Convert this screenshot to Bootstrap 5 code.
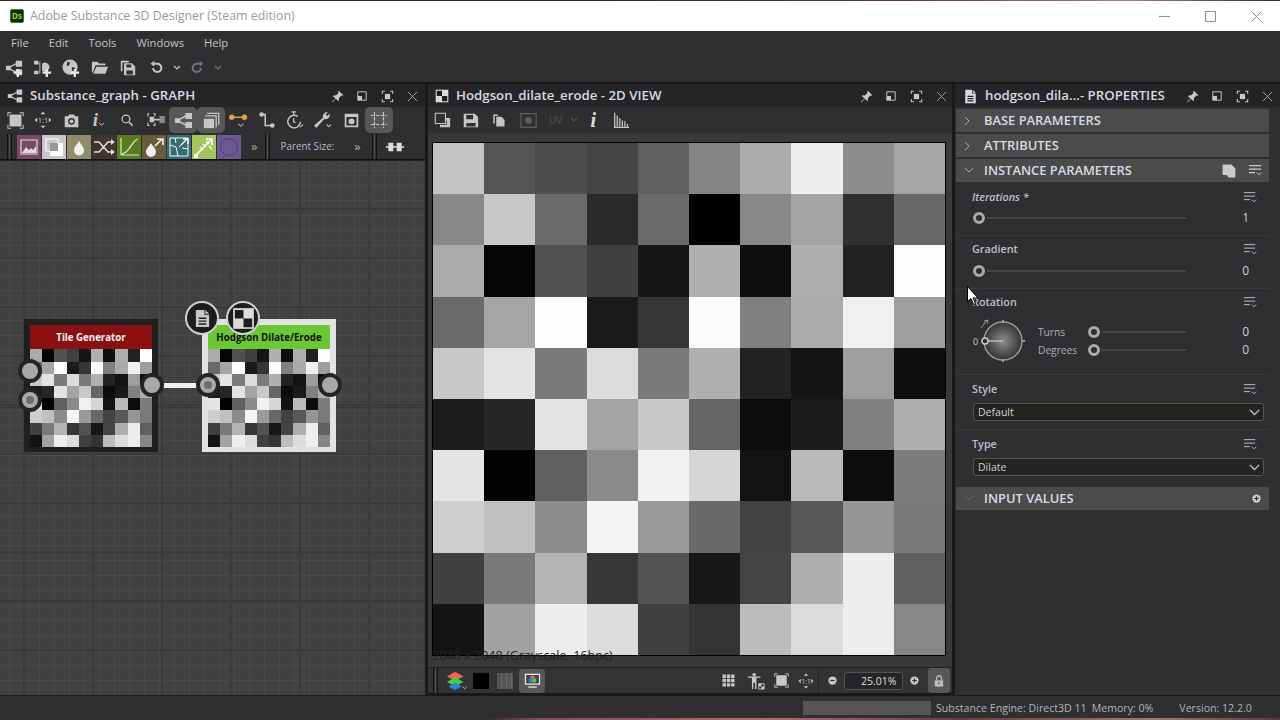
<!DOCTYPE html>
<html lang="en">
<head>
<meta charset="utf-8">
<title>Adobe Substance 3D Designer</title>
<link href="https://cdn.jsdelivr.net/npm/bootstrap@5.3.0/dist/css/bootstrap.min.css" rel="stylesheet">
<style>
html,body{height:100%}
body{width:1280px;height:720px;overflow:hidden;background:#2f2f31;color:#c9c9c9;font-family:"Open Sans","Liberation Sans",sans-serif;font-size:11px;line-height:1.2}
svg{display:block;flex:none}
.wall{height:1px;background:linear-gradient(90deg,#3a2a2a,#2a2226 40%,#5a3a38 70%,#a08070 88%,#3a2a2c)}
.wall-b{height:2px;background:linear-gradient(90deg,#2f2f31 38%,#8a4a58 42%,#b06a70 60%,#703a44 75%,#a07a6a 90%,#5a3a3a)}
.titlebar{height:30px;background:#fff;color:#9a9a9a;font-size:12.4px}
.ds-logo{width:14px;height:14px;margin:0 6px 0 10px;background:#0c2a10;border:1px solid #3d7a22;border-radius:2px;color:#7fe03a;font-size:8px;font-weight:700;line-height:12px;text-align:center}
.winbtn{width:46px;color:#8c8c8c}
.win-set{padding-right:1px}
.menubar{height:25px;padding:0 0 2px 11px;gap:20px;font-size:11.2px;color:#c4c4c4;background:#2f2f31}
.mainbar{height:26px;padding:0 0 3px 3px;gap:6.5px;color:#c6c6c6}
.icon22{width:22px}
.chev-slot{width:8px;margin:0 0 0 -1px}
.redo-slot{margin-left:-1px}
.workspace{height:613px;background:#19191a;padding-top:2px;gap:3px}
.pane-a{width:425px}.pane-b{width:524px}.pane-c{width:325px;margin-left:0}
.pane-head{height:23px;background:#252527;color:#d5dbe2;font-size:13.25px;font-weight:600;flex:none;padding-top:1px}
.head-ico{width:30px;color:#c8c8c8}
.head-acts{gap:5px;padding-right:3px;color:#c8c8c8}
.head-acts-b{padding-right:1px}
.head-act{width:20px}
.tools{height:26px;background:#2f2f31;color:#c6c6c6;flex:none}
.tbtn{width:28px;height:26px;border-radius:5px}
.tbtn.on{background:#585858}
.tbtn-dis{margin-left:2px}
.rowa{padding-left:1px}
.rowb{height:27px;border-bottom:1px solid #111;padding-top:1px;align-items:center}
.grip{width:5px;height:25px;margin-left:7px;border-left:1px solid #111;border-right:1px solid #111;background:#4a4a4a;background-clip:content-box;padding:0 1px}
.grip-d{margin-left:11px}
.pal{width:24px;height:24px;margin-left:1px}
.pal-first{margin-left:5px}
.more{color:#a8a8a8;font-size:13px}
.more-a{margin-left:10px}
.parent-lab{color:#aeb8c4;font-size:9.9px;margin-left:10px}
.more-b{margin-left:20px}
.graph-wrap{flex:1 1 auto;background-color:#414143;background-image:linear-gradient(#38383a,#38383a),linear-gradient(90deg,#3a3a3c 2px,transparent 2px),linear-gradient(0deg,#3a3a3c 2px,transparent 2px),linear-gradient(90deg,#4a4a44 1px,transparent 1px),linear-gradient(0deg,#4a4a44 1px,transparent 1px);background-size:100% 1px,69px 69px,69px 49px,15px 15px,15px 15px;background-position:0 246px,23px 0,0 0,9px 0,0 10px;background-repeat:no-repeat,repeat,repeat,repeat,repeat;overflow:hidden;border-top:1px solid #222}
.nodebox{position:absolute;top:158px;width:134px;height:133px;padding:6px 6px 5px}
.node-dark{left:24px;background:#1f1f20}
.node-sel{left:202px;background:#e2e2e2}
.node-in{position:relative;width:122px;height:122px}
.node-title{position:absolute;left:0;top:0;right:0;height:24px;padding-top:2px;font-size:9.7px;font-weight:700;display:flex;align-items:center;justify-content:center}
.title-red{background:#8a1011;color:#f2f2f2}
.title-green{background:#6cc735;color:#111}
.tile-grid{display:grid;grid-template-columns:repeat(10,1fr);grid-template-rows:repeat(10,1fr);width:100%;height:100%}
.port{position:absolute;width:24px;height:24px;margin:-12px 0 0 -12px;border-radius:50%;background:#a8a8a8;border:4px solid #242425}
.port-dot::after{content:"";position:absolute;left:4px;top:4px;width:8px;height:8px;border-radius:50%;background:#6e6e6e}
.wire{position:absolute;left:163px;top:222px;width:34px;height:5px;background:#f0f0f0}
.badge-ico{position:absolute;width:34px;height:34px;margin:-17px 0 0 -17px;border-radius:50%;background:#1d1d1e;border:2px solid #d0d0d0;display:flex;align-items:center;justify-content:center;color:#c8c8c8}
.view-wrap{flex:1 1 auto;background:#39393b;padding:9px 0 0 4px;position:relative;overflow:hidden}
.view-img{width:514px;height:514px;border:1px solid #000}
.view-note{position:absolute;left:4px;top:514px;color:#222;font-size:12.6px;line-height:18px}
.botbar{height:26px;background:#333335;color:#c8c8c8;flex:none;border-top:1px solid #222;margin-bottom:2px}
.grip-c{margin-left:5px}
.lay-ico{margin-left:8px}
.mini-black{width:16px;height:16px;background:#000;margin-left:5px}
.mini-str{width:16px;height:16px;margin-left:8px;background:repeating-linear-gradient(90deg,#555 0 4px,#666 4px 5px)}
.mon-btn{width:26px;height:24px;margin-left:6px;background:#585858;border-radius:4px}
.zoombox{width:59px;height:18px;border:1px solid #555;border-radius:3px;background:#252527;font-size:10.5px;text-align:right;padding:2px 5px 0 0;color:#ddd;margin:0 6px}
.lockbtn{width:22px;height:25px;background:#585858;border-radius:4px;margin-left:8.5px;color:#bbb}
.vsep{width:1px;height:24px;background:#222;margin:0 8px 0 3px}
.gap-p{margin-left:10.5px}.gap-f{margin-left:9.5px}.gap-o{margin-left:7.5px}
.end-sp{width:2px}
.props{flex:1 1 auto;padding:0 11px 0 1px;background:#2f2f31}
.sect{height:23px;margin-top:2px;background:#4b4b4b;color:#d5dce4;font-size:12.9px;font-weight:600;padding-left:8px;flex:none}
.sect-ico{width:20px;margin-right:0;color:#aaa}
.sect-ico-dim{color:#666}
.sect-acts{gap:11px;padding-right:7px;color:#ccc}
.prm{border-bottom:1px solid #3a3a3c;padding:5px 20px 0 17px;flex:none}
.prm-a{height:54px;padding-top:7px}.prm-b{height:53px}.prm-c{height:86px}.prm-d{height:55px;padding-top:6px}
.prm-d.nobr{border:0}
.prm-lab{height:16px;color:#b9c0c8;font-size:10.8px;font-weight:600;margin-left:-1px}
.lab-it{font-style:italic}
.prm-menu{margin-right:-8px}
.sld{height:16px;margin-top:5px}
.prm-b .sld{margin-top:6px}
.knob-hd{width:12px;height:12px;border-radius:50%;border:3px solid #aaa;flex:none}
.trk{height:2px;background:#47474a;margin-left:2px}
.trk-w{width:199px}.trk-s{width:84px}
.val{margin-left:auto;color:#d0d0d0;font-size:12px}
.rot-row{margin-top:6px;height:50px}
.rot-labs{margin-left:5px;width:100%}
.rot-line{height:18px;color:#aab2ba;font-size:10.2px}
.rot-name{width:50px}
.selbox.form-select{width:291px;margin:6px 0 0 0;height:18px;padding:0 0 0 4px;font-size:10.5px;line-height:16px;background-color:#252320;color:#d0d0d0;border:1px solid #555;border-radius:3px;font-family:inherit;background-size:11px 7px;background-position:right 3px center;background-image:url("data:image/svg+xml,%3Csvg xmlns='http://www.w3.org/2000/svg' viewBox='0 0 11 7'%3E%3Cpath d='M1 1l4.500 4.500L10 1' fill='none' stroke='%23bbb' stroke-width='1.400'/%3E%3C/svg%3E")}
.cursor{position:absolute;left:967px;top:286px}
.statusbar{height:23px;background:#2f2f31;border-top:1px solid #19191a;font-size:10.6px;color:#b4b4b4;padding-top:2px}
.progress-slot{width:128px;height:14px;background:#555;margin:0 5px 0 803px}
.st-mem{margin-left:5px}.st-ver{margin-left:26px}
.ital-i{font:italic 700 19px "Liberation Serif",serif}
.ital-v{font:italic 700 20px "Liberation Serif",serif;color:#ddd}
.uv-lab{color:#555;font-size:10px;margin-left:7px}
.uv-chev{color:#555;margin-left:8px}
.i-slot{margin-left:1px}
</style>
</head>
<body class="d-flex flex-column">
<svg width="0" height="0" class="position-absolute">
<defs>
<symbol id="i-graph" viewBox="0 0 20 20"><path fill="currentColor" d="M1 7.500h5.500v5H1zM12 2h7v6.500h-7zM12 11.500h7V18h-7z"/><path d="M5 9l8-4M5 11l8 4" stroke="currentColor" stroke-width="1.500" fill="none"/></symbol>
<symbol id="i-plus" viewBox="0 0 20 20"><path fill="#e8e8e8" d="M13 11h2.500v3H19v2.500h-3.500V20H13v-3.500H9.500V14H13z"/></symbol>
<symbol id="i-fn" viewBox="0 0 20 20"><path fill="currentColor" d="M0 2h5v4H0zM0 13h5v4H0zM6 3h1v13H6zM9 5a5 5 0 1 1 0 8z"/></symbol>
<symbol id="i-globe" viewBox="0 0 20 20"><circle cx="9" cy="9" r="8.500" fill="currentColor"/><path fill="#2f2f31" d="M6 3l3 1-1 3-3 1zM11 9l4 1-2 4-2-1z"/></symbol>
<symbol id="i-folder" viewBox="0 0 20 20"><path fill="currentColor" d="M1 3h6l2 2h7v2H5L2 15H1zM6 8.500h13l-3 8H2.500z"/></symbol>
<symbol id="i-stack" viewBox="0 0 20 20"><path fill="currentColor" fill-rule="evenodd" d="M1 1h10v2H3v11H1zM5 4h10l4 4v11H5zM8 5.500v4h6v-4zM8 13v5h8v-5z"/></symbol>
<symbol id="i-floppy" viewBox="0 0 20 20"><path fill="currentColor" fill-rule="evenodd" d="M2 2h13l4 4v12H2zM5 3.500v5h8v-5zM5 13v4h11v-4z"/></symbol>
<symbol id="i-undo" viewBox="0 0 20 20"><path d="M5 5h6a5.500 5.500 0 1 1-5.500 5.500" fill="none" stroke="currentColor" stroke-width="2.600"/><path fill="currentColor" d="M7 1v8L2 5z"/></symbol>
<symbol id="i-redo" viewBox="0 0 20 20"><path d="M15 5H9a5.500 5.500 0 1 0 5.500 5.500" fill="none" stroke="currentColor" stroke-width="2.600"/><path fill="currentColor" d="M13 1v8l5-4z"/></symbol>
<symbol id="i-chev" viewBox="0 0 8 6"><path d="M1 1l3 3 3-3" fill="none" stroke="currentColor" stroke-width="1.200"/></symbol>
<symbol id="i-pin" viewBox="0 0 20 20"><path fill="currentColor" d="M12 1l7 7-2 1-1-.500-4 4 .500 3-1.500 1.500-3.500-3.500-5 5.500-1-1 5.500-5L3 9.500 4.500 8l3 .500 4-4L11 3z"/></symbol>
<symbol id="i-restore" viewBox="0 0 20 20"><path d="M3 3h14v14H3z" fill="none" stroke="currentColor" stroke-width="1.600"/><path fill="currentColor" d="M3 10h7V3H3z" transform="translate(0 7)"/></symbol>
<symbol id="i-max" viewBox="0 0 20 20"><path d="M2 6V2h4M14 2h4v4M18 14v4h-4M6 18H2v-4" fill="none" stroke="currentColor" stroke-width="1.600"/><path fill="currentColor" d="M6 6h8v8H6z"/></symbol>
<symbol id="i-x" viewBox="0 0 20 20"><path d="M3 3l14 14M17 3L3 17" stroke="currentColor" stroke-width="1.100" fill="none"/></symbol>
<symbol id="i-doc" viewBox="0 0 20 20"><path fill="currentColor" fill-rule="evenodd" d="M3 1h9v5h5v13H3zM13 1l4 4h-4zM6 9v1.500h8V9zM6 12v1.500h8V12zM6 15v1.500h8V15z"/></symbol>
<symbol id="i-check" viewBox="0 0 20 20"><path fill="#dcdcdc" d="M1 1h18v18H1z"/><path fill="#1d1d1e" d="M2.500 2.500H10V10H2.500zM10 10h7.500v7.500H10z"/></symbol>
<symbol id="i-fit" viewBox="0 0 20 20"><path d="M1 5V1h4M15 1h4v4M19 15v4h-4M5 19H1v-4" fill="none" stroke="currentColor" stroke-width="1.200"/><path fill="currentColor" d="M3 3h14v14H3z"/></symbol>
<symbol id="i-one" viewBox="0 0 24 24"><path fill="currentColor" d="M12 2l3 3H9zM12 22l-3-3h6zM2 12l3-3v6zM22 12l-3 3V9z"/><text x="12" y="15.500" font-size="9" text-anchor="middle" fill="currentColor" font-family="Open Sans">1:1</text></symbol>
<symbol id="i-cam" viewBox="0 0 20 20"><path fill="currentColor" fill-rule="evenodd" d="M2 5h4l1-2h6l1 2h4v13H2zM10 7a4 4 0 1 0 0 8 4 4 0 0 0 0-8z"/><circle cx="10" cy="11" r="2.300" fill="currentColor"/></symbol>
<symbol id="i-search" viewBox="0 0 20 20"><circle cx="8.500" cy="8.500" r="5.500" fill="none" stroke="currentColor" stroke-width="1.800"/><path d="M13 13l5 5" stroke="currentColor" stroke-width="2.200"/></symbol>
<symbol id="i-snap" viewBox="0 0 24 20"><path d="M4 6V3h2M10 3h2v3M12 13v3h-2M6 16H4v-3" stroke="currentColor" stroke-width="1.200" fill="none"/><path fill="currentColor" d="M6 6.500h5v6H6zM11 8.500h8v2h-8z"/><path fill="#8a8a8a" d="M17 5.500h6v8h-6z"/></symbol>
<symbol id="i-layers2" viewBox="0 0 20 20"><path d="M5 1.500h13.500V15M2.500 4.500h13V18" fill="none" stroke="currentColor" stroke-width="1.500"/><path fill="currentColor" d="M1 8h12v11H1z"/></symbol>
<symbol id="i-link" viewBox="0 0 24 20"><path d="M4 7h14" stroke="#e0a24a" stroke-width="1.600"/><circle cx="4" cy="7" r="3" fill="#e0a24a"/><circle cx="18" cy="7" r="3" fill="#e0a24a"/><path d="M11 14l3 3 3-3" fill="none" stroke="#aaa" stroke-width="1.200"/></symbol>
<symbol id="i-route" viewBox="0 0 20 20"><circle cx="4" cy="4" r="2.500" fill="currentColor"/><circle cx="16" cy="16" r="2.500" fill="currentColor"/><path d="M4 4h4v12h8" fill="none" stroke="currentColor" stroke-width="1.700"/></symbol>
<symbol id="i-timer" viewBox="0 0 22 20"><path d="M14 6a7 7 0 1 0 3 6" fill="none" stroke="currentColor" stroke-width="1.600"/><path d="M7 1h5M9.500 1v3M9.500 8v4l2 1" stroke="currentColor" stroke-width="1.400" fill="none"/><path d="M15 15l2.500 2.500L20 15" fill="none" stroke="#aaa" stroke-width="1.200"/></symbol>
<symbol id="i-wrench" viewBox="0 0 22 20"><path fill="currentColor" d="M16 1a5 5 0 0 0-5 6.500L1 16l2.500 3 9-10A5 5 0 0 0 18.500 3l-3 2.500L14 4l2.500-3z"/><path d="M15 15l2.500 2.500L20 15" fill="none" stroke="#aaa" stroke-width="1.200"/></symbol>
<symbol id="i-view" viewBox="0 0 20 20"><path fill="currentColor" fill-rule="evenodd" d="M2 2h16v16H2zM4 6v10h12V6z"/><circle cx="10" cy="11" r="3.500" fill="currentColor"/></symbol>
<symbol id="i-frame" viewBox="0 0 20 20"><path d="M5 1v18M15 1v18M1 5h18M1 15h18" stroke="currentColor" stroke-width="1.300" stroke-dasharray="4 1.500" fill="none"/></symbol>
<symbol id="i-pic" viewBox="0 0 24 24"><path d="M4 5h16v14H4z" fill="none" stroke="#e4d8de" stroke-width="1.200"/><path fill="#e4d8de" d="M5 18l4-6 3 3 2-2 2 2 3-4v7z"/></symbol>
<symbol id="i-blend" viewBox="0 0 24 24"><path d="M4 4h12v12H4z" fill="none" stroke="#fff" stroke-width="1.200"/><path fill="#fff" d="M8 8h13v13H8z"/><path fill="#999" d="M8 8h8v8H8z"/></symbol>
<symbol id="i-drop" viewBox="0 0 24 24"><path fill="#f0f0f0" d="M12 6c2.500 4 5 6 5 9.500a5 5 0 0 1-10 0c0-3.500 2.500-5.500 5-9.500z"/></symbol>
<symbol id="i-shuf" viewBox="0 0 24 24"><path d="M2 7h5l9 10h4M2 17h5l9-10h4" stroke="#ddd" stroke-width="1.500" fill="none"/><path fill="#ddd" d="M19 4l4 3-4 3zM19 14l4 3-4 3z"/></symbol>
<symbol id="i-curve" viewBox="0 0 24 24"><path d="M4 3v17h18" stroke="#d8e8c0" stroke-width="1.200" fill="none"/><path d="M5 19c5-1 6-4 9-8s4-6 7-7" stroke="#d8e8c0" stroke-width="1.300" fill="none"/></symbol>
<symbol id="i-droparrow" viewBox="0 0 24 24"><path fill="#eee" d="M9 8c2 4 5 5 5 9a5 5 0 0 1-10 0c0-4 3-5 5-9z"/><path d="M13 11l7-7M15 4h6v6" stroke="#eee" stroke-width="1.700" fill="none"/></symbol>
<symbol id="i-warp" viewBox="0 0 24 24"><path d="M3 3h18v18H3zM3 10l6 2 2 9M12 12l3-3M8 3l1 5M21 14l-6-1" fill="none" stroke="#dff" stroke-width="1"/><path d="M14 10l6-6M16 4h5v5" stroke="#fff" stroke-width="1.300" fill="none"/></symbol>
<symbol id="i-grad" viewBox="0 0 24 24"><path d="M3 21L20 4M14 4h6v6" stroke="#fff" stroke-width="1.600" fill="none"/><path d="M8 12l3 3M11 9l3 3M14 6l3 3M17 11l3 3" stroke="#fff" stroke-width="1.100"/><path fill="#fff" d="M2 19h4v4H2z"/></symbol>
<symbol id="i-ring" viewBox="0 0 24 24"><circle cx="12" cy="12" r="8.500" fill="none" stroke="#46407a" stroke-width="1"/></symbol>
<symbol id="i-nodes" viewBox="0 0 24 14"><path fill="#ddd" d="M1 6h22v2H1zM4 2h6v10H4zM14 2h6v10h-6z"/></symbol>
<symbol id="i-card" viewBox="0 0 20 20"><path fill="currentColor" d="M2 2h11l5 5v11h-9l-1-2-1-1H2z" /></symbol>
<symbol id="i-menu" viewBox="0 0 16 16"><path d="M1 3h13M1 7h13M1 11h7" stroke="currentColor" stroke-width="1.100" fill="none"/><path d="M10 11l2.500 2.500L15 11" stroke="currentColor" stroke-width="1.100" fill="none"/></symbol>
<symbol id="i-menub" viewBox="0 0 16 16"><path d="M1 3h14M1 7h14M1 11h7" stroke="currentColor" stroke-width="1.700" fill="none"/><path d="M10 11l2.500 2.500L15 11" stroke="currentColor" stroke-width="1.100" fill="none"/></symbol>
<symbol id="i-copy" viewBox="0 0 20 20"><path d="M1.500 1.500h12v12h-12z" fill="none" stroke="currentColor" stroke-width="1.300"/><path fill="currentColor" d="M7 15h8v-5h-1V7h5v11H7z"/></symbol>
<symbol id="i-paste" viewBox="0 0 20 20"><path fill="currentColor" d="M3 2h6v2H5v10H3zM7 5h7l4 4v9H7z"/></symbol>
<symbol id="i-disabled" viewBox="0 0 20 20"><path d="M1 2h18v16H1z" fill="none" stroke="#5c5c5c" stroke-width="1.500"/><circle cx="10" cy="10" r="4" fill="#5c5c5c"/></symbol>
<symbol id="i-bars" viewBox="0 0 20 20"><path d="M2 1v17h17M5 4v13M8 7v10M11 10v7M14 11v6M17 14v3" stroke="currentColor" stroke-width="1.500" fill="none"/></symbol>
<symbol id="i-stackc" viewBox="0 0 24 24"><path fill="#ef6a4a" d="M10 2l9 5-9 5-9-5z"/><path fill="#3fce4a" d="M10 8l9 5-9 5-9-5z"/><path fill="#2f80d8" d="M10 14l7 4-7 4-7-4z"/><path d="M18 18l2.500 2.500L23 18" stroke="#aaa" fill="none"/></symbol>
<symbol id="i-mon" viewBox="0 0 20 20"><path d="M1 2h18v13H1z" fill="#e8e8e8"/><path d="M2.500 3.500h15v10h-15z" fill="#444"/><circle cx="10" cy="6.500" r="2.600" fill="#ef5a4a"/><circle cx="8" cy="10" r="2.600" fill="#2f80d8"/><circle cx="12" cy="10" r="2.600" fill="#3fce4a"/><path d="M5 17h10v1.500H5z" fill="#e8e8e8"/></symbol>
<symbol id="i-grid" viewBox="0 0 20 20"><path fill="currentColor" d="M2 2h4.500v4.500H2zM7.800 2h4.500v4.500H7.800zM13.500 2H18v4.500h-4.500zM2 7.800h4.500v4.500H2zM7.800 7.800h4.500v4.500H7.800zM13.500 7.800H18v4.500h-4.500zM2 13.500h4.500V18H2zM7.800 13.500h4.500V18H7.800zM13.500 13.500H18V18h-4.500z"/></symbol>
<symbol id="i-person" viewBox="0 0 20 20"><circle cx="8" cy="3" r="2" fill="currentColor"/><path fill="currentColor" d="M1 5h14v1.500h-4.500V19H9v-7H7v7H5.500V6.500H1z"/><path d="M13 13h6v6h-6z" fill="none" stroke="currentColor"/><path fill="currentColor" d="M13 13h3v3h-3zM16 16h3v3h-3z"/></symbol>
<symbol id="i-minus" viewBox="0 0 12 12"><circle cx="6" cy="6" r="4.500" fill="currentColor"/><path d="M3.500 6h5" stroke="#333" stroke-width="1.300"/></symbol>
<symbol id="i-pluss" viewBox="0 0 12 12"><circle cx="6" cy="6" r="4.500" fill="currentColor"/><path d="M3.500 6h5M6 3.500v5" stroke="#333" stroke-width="1.300"/></symbol>
<symbol id="i-lock" viewBox="0 0 20 20"><path d="M6.500 9V6a3.500 3.500 0 0 1 7 0v3" fill="none" stroke="currentColor" stroke-width="1.800"/><path fill="currentColor" d="M4 9h12v9H4z"/><circle cx="10" cy="13" r="1.300" fill="#585858"/></symbol>
</defs>
</svg>

<div class="wall"></div>
<div class="titlebar d-flex align-items-center">
  <div class="ds-logo">Ds</div>
  <span>Adobe Substance 3D Designer (Steam edition)</span>
  <div class="win-set ms-auto d-flex">
    <div class="winbtn d-flex justify-content-center"><svg width="11" height="11" viewBox="0 0 11 11"><path d="M0 5.500h11" stroke="currentColor"/></svg></div>
    <div class="winbtn d-flex justify-content-center"><svg width="11" height="11" viewBox="0 0 11 11"><path d="M.5.500h10v10H.5z" fill="none" stroke="currentColor"/></svg></div>
    <div class="winbtn d-flex justify-content-center"><svg width="11" height="11" viewBox="0 0 11 11"><path d="M.5.500l10 10M10.500.500l-10 10" stroke="currentColor"/></svg></div>
  </div>
</div>
<div class="menubar d-flex align-items-center"><span>File</span><span>Edit</span><span>Tools</span><span>Windows</span><span>Help</span></div>
<div class="mainbar d-flex align-items-center">
  <div class="icon22 position-relative"><svg width="18" height="18" class="mx-auto"><use href="#i-graph"/><use href="#i-plus"/></svg></div>
  <div class="icon22"><svg width="18" height="18" class="mx-auto"><use href="#i-fn"/><use href="#i-plus"/></svg></div>
  <div class="icon22"><svg width="18" height="18" class="mx-auto"><use href="#i-globe"/><use href="#i-plus"/></svg></div>
  <div class="icon22"><svg width="18" height="18" class="mx-auto"><use href="#i-folder"/></svg></div>
  <div class="icon22"><svg width="16" height="16" class="mx-auto"><use href="#i-stack"/></svg></div>
  <div class="icon22"><svg width="15" height="15" class="mx-auto"><use href="#i-undo"/></svg></div>
  <div class="chev-slot"><svg width="8" height="6"><use href="#i-chev"/></svg></div>
  <div class="icon22 redo-slot text-secondary"><svg width="15" height="15" class="mx-auto"><use href="#i-redo"/></svg></div>
  <div class="chev-slot text-secondary"><svg width="8" height="6"><use href="#i-chev"/></svg></div>
</div>

<div class="workspace d-flex">
  <!-- GRAPH -->
  <section class="pane-a d-flex flex-column">
    <div class="pane-head d-flex align-items-center">
      <div class="head-ico d-flex justify-content-center"><svg width="16" height="16"><use href="#i-graph"/></svg></div>
      <span>Substance_graph - GRAPH</span>
      <div class="head-acts ms-auto d-flex">
        <div class="head-act"><svg width="13" height="13" class="mx-auto"><use href="#i-pin"/></svg></div>
        <div class="head-act"><svg width="12" height="12" class="mx-auto"><use href="#i-restore"/></svg></div>
        <div class="head-act"><svg width="13" height="13" class="mx-auto"><use href="#i-max"/></svg></div>
        <div class="head-act"><svg width="13" height="13" class="mx-auto"><use href="#i-x"/></svg></div>
      </div>
    </div>
    <div class="tools rowa d-flex align-items-center">
      <div class="tbtn d-flex align-items-center justify-content-center"><svg width="17" height="17"><use href="#i-fit"/></svg></div>
      <div class="tbtn d-flex align-items-center justify-content-center"><svg width="20" height="20"><use href="#i-one"/></svg></div>
      <div class="tbtn d-flex align-items-center justify-content-center"><svg width="17" height="17"><use href="#i-cam"/></svg></div>
      <div class="tbtn d-flex align-items-center justify-content-center"><span class="ital-i">i</span><svg width="7" height="5" class="mt-2"><use href="#i-chev"/></svg></div>
      <div class="tbtn d-flex align-items-center justify-content-center"><svg width="14" height="14"><use href="#i-search"/></svg></div>
      <div class="tbtn d-flex align-items-center justify-content-center"><svg width="22" height="18"><use href="#i-snap"/></svg></div>
      <div class="tbtn on d-flex align-items-center justify-content-center"><svg width="19" height="19"><use href="#i-graph"/></svg></div>
      <div class="tbtn on d-flex align-items-center justify-content-center"><svg width="17" height="17"><use href="#i-layers2"/></svg></div>
      <div class="tbtn d-flex align-items-center justify-content-center"><svg width="22" height="18"><use href="#i-link"/></svg></div>
      <div class="tbtn d-flex align-items-center justify-content-center"><svg width="18" height="18"><use href="#i-route"/></svg></div>
      <div class="tbtn d-flex align-items-center justify-content-center"><svg width="20" height="18"><use href="#i-timer"/></svg></div>
      <div class="tbtn d-flex align-items-center justify-content-center"><svg width="20" height="18"><use href="#i-wrench"/></svg></div>
      <div class="tbtn d-flex align-items-center justify-content-center"><svg width="17" height="17"><use href="#i-view"/></svg></div>
      <div class="tbtn on d-flex align-items-center justify-content-center"><svg width="18" height="18"><use href="#i-frame"/></svg></div>
    </div>
    <div class="tools rowb d-flex">
      <div class="grip"></div>
      <div class="pal pal-first d-flex align-items-center" style="background:#7a4a60"><svg width="24" height="24"><use href="#i-pic"/></svg></div>
      <div class="pal" style="background:#c8c8c8"><svg width="24" height="24"><use href="#i-blend"/></svg></div>
      <div class="pal" style="background:#8f8c6c"><svg width="24" height="24"><use href="#i-drop"/></svg></div>
      <div class="pal" style="background:#40342c"><svg width="24" height="24"><use href="#i-shuf"/></svg></div>
      <div class="pal" style="background:#5a7a20"><svg width="24" height="24"><use href="#i-curve"/></svg></div>
      <div class="pal" style="background:#6a5c3a"><svg width="24" height="24"><use href="#i-droparrow"/></svg></div>
      <div class="pal" style="background:#3a6a72"><svg width="24" height="24"><use href="#i-warp"/></svg></div>
      <div class="pal" style="background:#a4c460"><svg width="24" height="24"><use href="#i-grad"/></svg></div>
      <div class="pal" style="background:#6a5a90"><svg width="24" height="24"><use href="#i-ring"/></svg></div>
      <span class="more more-a">»</span>
      <div class="grip ms-2"></div>
      <span class="parent-lab text-nowrap">Parent Size:</span>
      <span class="more more-b">»</span>
      <div class="grip grip-d"></div>
      <svg class="ms-2" width="20" height="12"><use href="#i-nodes"/></svg>
    </div>
    <div class="graph-wrap position-relative">
      <div class="nodebox node-dark"><div class="node-in"><div class="tile-grid" data-tiles></div><div class="node-title title-red">Tile Generator</div></div></div>
      <div class="nodebox node-sel"><div class="node-in"><div class="tile-grid" data-tiles></div><div class="node-title title-green">Hodgson Dilate/Erode</div></div></div>
      <div class="wire"></div>
      <div class="port" style="left:30px;top:210px"></div>
      <div class="port port-dot" style="left:30px;top:239px"></div>
      <div class="port" style="left:152px;top:224px"></div>
      <div class="port port-dot" style="left:208px;top:224px"></div>
      <div class="port" style="left:330px;top:224px"></div>
      <div class="badge-ico" style="left:202px;top:157px"><svg width="19" height="19"><use href="#i-doc"/></svg></div>
      <div class="badge-ico" style="left:243px;top:157px"><svg width="23" height="23"><use href="#i-check"/></svg></div>
    </div>
  </section>

  <!-- 2D VIEW -->
  <section class="pane-b d-flex flex-column">
    <div class="pane-head d-flex align-items-center">
      <div class="d-flex justify-content-center" style="width:28px"><svg width="14" height="14"><use href="#i-check"/></svg></div>
      <span>Hodgson_dilate_erode - 2D VIEW</span>
      <div class="head-acts head-acts-b ms-auto d-flex">
        <div class="head-act"><svg width="13" height="13" class="mx-auto"><use href="#i-pin"/></svg></div>
        <div class="head-act"><svg width="12" height="12" class="mx-auto"><use href="#i-restore"/></svg></div>
        <div class="head-act"><svg width="13" height="13" class="mx-auto"><use href="#i-max"/></svg></div>
        <div class="head-act"><svg width="13" height="13" class="mx-auto"><use href="#i-x"/></svg></div>
      </div>
    </div>
    <div class="tools d-flex align-items-center">
      <div class="tbtn d-flex align-items-center justify-content-center"><svg width="17" height="17"><use href="#i-copy"/></svg></div>
      <div class="tbtn d-flex align-items-center justify-content-center"><svg width="17" height="17"><use href="#i-floppy"/></svg></div>
      <div class="tbtn d-flex align-items-center justify-content-center"><svg width="15" height="15"><use href="#i-paste"/></svg></div>
      <div class="tbtn tbtn-dis d-flex align-items-center justify-content-center"><svg width="17" height="17"><use href="#i-disabled"/></svg></div>
      <span class="uv-lab">UV</span>
      <svg width="8" height="6" class="uv-chev"><use href="#i-chev"/></svg>
      <div class="tbtn i-slot d-flex align-items-center justify-content-center"><span class="ital-v">i</span></div>
      <div class="tbtn d-flex align-items-center justify-content-center"><svg width="17" height="17"><use href="#i-bars"/></svg></div>
    </div>
    <div class="view-wrap">
      <div class="view-img"><div class="tile-grid" data-tiles></div></div>
      <div class="view-note">2048 x 2048 (Grayscale, 16bpc)</div>
    </div>
    <div class="botbar d-flex align-items-center">
      <div class="grip grip-c"></div>
      <svg width="22" height="22" class="lay-ico"><use href="#i-stackc"/></svg>
      <div class="mini-black"></div>
      <div class="mini-str"></div>
      <div class="mon-btn d-flex align-items-center justify-content-center"><svg width="17" height="17"><use href="#i-mon"/></svg></div>
      <div class="ms-auto d-flex align-items-center">
        <svg width="15" height="15"><use href="#i-grid"/></svg>
        <svg width="18" height="18" class="gap-p"><use href="#i-person"/></svg>
        <svg width="15" height="15" class="gap-f"><use href="#i-fit"/></svg>
        <svg width="18" height="18" class="gap-o"><use href="#i-one"/></svg>
        <div class="vsep"></div>
        <svg width="11" height="11"><use href="#i-minus"/></svg>
        <div class="zoombox">25.01%</div>
        <svg width="11" height="11"><use href="#i-pluss"/></svg>
        <div class="lockbtn d-flex align-items-center justify-content-center"><svg width="14" height="14"><use href="#i-lock"/></svg></div>
        <span class="end-sp"></span>
      </div>
    </div>
  </section>

  <!-- PROPERTIES -->
  <section class="pane-c d-flex flex-column">
    <div class="pane-head d-flex align-items-center">
      <div class="d-flex justify-content-center" style="width:30px"><svg width="15" height="15"><use href="#i-doc"/></svg></div>
      <span>hodgson_dila...- PROPERTIES</span>
      <div class="head-acts ms-auto d-flex">
        <div class="head-act"><svg width="13" height="13" class="mx-auto"><use href="#i-pin"/></svg></div>
        <div class="head-act"><svg width="12" height="12" class="mx-auto"><use href="#i-restore"/></svg></div>
        <div class="head-act"><svg width="13" height="13" class="mx-auto"><use href="#i-max"/></svg></div>
        <div class="head-act"><svg width="13" height="13" class="mx-auto"><use href="#i-x"/></svg></div>
      </div>
    </div>
    <div class="props d-flex flex-column">
      <div class="sect d-flex align-items-center"><div class="sect-ico"><svg width="7" height="10" viewBox="0 0 7 10"><path d="M1 1l4 4-4 4" fill="none" stroke="currentColor"/></svg></div>BASE PARAMETERS</div>
      <div class="sect d-flex align-items-center"><div class="sect-ico"><svg width="7" height="10" viewBox="0 0 7 10"><path d="M1 1l4 4-4 4" fill="none" stroke="currentColor"/></svg></div>ATTRIBUTES</div>
      <div class="sect d-flex align-items-center"><div class="sect-ico"><svg width="10" height="7" viewBox="0 0 10 7"><path d="M1 1l4 4 4-4" fill="none" stroke="currentColor"/></svg></div>INSTANCE PARAMETERS
        <div class="sect-acts ms-auto d-flex"><svg width="16" height="16"><use href="#i-card"/></svg><svg width="14" height="14"><use href="#i-menub"/></svg></div></div>

      <div class="prm prm-a">
        <div class="prm-lab lab-it d-flex align-items-center">Iterations *<svg width="14" height="14" class="ms-auto prm-menu"><use href="#i-menu"/></svg></div>
        <div class="sld d-flex align-items-center"><div class="knob-hd"></div><div class="trk trk-w"></div><span class="val">1</span></div>
      </div>
      <div class="prm prm-b">
        <div class="prm-lab d-flex align-items-center">Gradient<svg width="14" height="14" class="ms-auto prm-menu"><use href="#i-menu"/></svg></div>
        <div class="sld d-flex align-items-center"><div class="knob-hd"></div><div class="trk trk-w"></div><span class="val">0</span></div>
      </div>
      <div class="prm prm-c">
        <div class="prm-lab d-flex align-items-center">Rotation<svg width="14" height="14" class="ms-auto prm-menu"><use href="#i-menu"/></svg></div>
        <div class="rot-row d-flex align-items-center">
          <svg width="60" height="50" viewBox="0 0 60 50">
            <defs><radialGradient id="kg"><stop offset="0" stop-color="#8e8e8e"/><stop offset="1" stop-color="#333"/></radialGradient></defs>
            <text x="0" y="29" font-size="9" fill="#c9c9c9" font-family="Open Sans" textLength="3">0</text>
            <circle cx="30" cy="25" r="19" fill="url(#kg)" stroke="#999" stroke-width="1.500"/>
            <path d="M30 4v3M30 43v3M49 25h3" stroke="#999" stroke-width="2"/>
            <path d="M12 25h18" stroke="#ccc" stroke-width="1.200"/>
            <circle cx="12" cy="25" r="3" fill="#2f2f31" stroke="#ccc" stroke-width="1.500"/>
            <path d="M8 12l6-8M11 5l4-1-1 4" stroke="#999" fill="none"/>
          </svg>
          <div class="rot-labs">
            <div class="rot-line d-flex align-items-center"><span class="rot-name">Turns</span><div class="knob-hd"></div><div class="trk trk-s"></div><span class="val">0</span></div>
            <div class="rot-line d-flex align-items-center"><span class="rot-name">Degrees</span><div class="knob-hd"></div><div class="trk trk-s"></div><span class="val">0</span></div>
          </div>
        </div>
      </div>
      <div class="prm prm-d">
        <div class="prm-lab d-flex align-items-center">Style<svg width="14" height="14" class="ms-auto prm-menu"><use href="#i-menu"/></svg></div>
        <select class="form-select selbox"><option>Default</option></select>
      </div>
      <div class="prm prm-d nobr">
        <div class="prm-lab d-flex align-items-center">Type<svg width="14" height="14" class="ms-auto prm-menu"><use href="#i-menu"/></svg></div>
        <select class="form-select selbox"><option>Dilate</option></select>
      </div>
      <div class="sect d-flex align-items-center"><div class="sect-ico sect-ico-dim"><svg width="10" height="7" viewBox="0 0 10 7"><path d="M1 1l4 4 4-4" fill="none" stroke="currentColor"/></svg></div>INPUT VALUES
        <div class="sect-acts ms-auto d-flex"><svg width="11" height="11"><use href="#i-pluss"/></svg></div></div>
    </div>
  </section>
</div>

<div class="statusbar d-flex align-items-center">
  <div class="progress-slot"></div>
  <span>Substance Engine: Direct3D 11</span>
  <span class="st-mem">Memory: 0%</span>
  <span class="st-ver">Version: 12.2.0</span>
</div>
<div class="wall-b"></div>

<svg class="cursor" width="12" height="20" viewBox="0 0 12 20"><path d="M.5.500v15l3.500-3 2.500 6 2-1-2.500-5.500H11z" fill="#fff" stroke="#000"/></svg>

<script src="https://cdn.jsdelivr.net/npm/bootstrap@5.3.0/dist/js/bootstrap.bundle.min.js"></script>
<script>
var tiles=[
0xc4,0x55,0x4d,0x45,0x60,0x85,0xab,0xee,0x8c,0xa5,
0x88,0xc8,0x6a,0x2a,0x6a,0x00,0x88,0xa3,0x30,0x68,
0xab,0x04,0x50,0x40,0x16,0xb0,0x0e,0xae,0x22,0xfd,
0x6a,0xa5,0xfe,0x1a,0x36,0xfb,0x80,0xaa,0xf0,0x9e,
0xc8,0xe4,0x7a,0xdc,0x7a,0xb0,0x22,0x14,0x9e,0x0e,
0x1c,0x26,0xe4,0xa4,0xc8,0x66,0x0c,0x1a,0x80,0xae,
0xe4,0x02,0x60,0x8a,0xf0,0xd6,0x12,0xba,0x0c,0x7c,
0xce,0xbf,0x8c,0xf4,0x9a,0x68,0x42,0x58,0x96,0x7a,
0x40,0x7a,0xb4,0x36,0x52,0x18,0x44,0xae,0xee,0x60,
0x14,0xa2,0xee,0xdc,0x40,0x34,0xbc,0xdc,0xee,0x86];
document.querySelectorAll('[data-tiles]').forEach(function(g){
  tiles.forEach(function(v){
    var d=document.createElement('div');
    d.style.background='rgb('+v+','+v+','+v+')';
    g.appendChild(d);
  });
});
</script>
</body>
</html>
